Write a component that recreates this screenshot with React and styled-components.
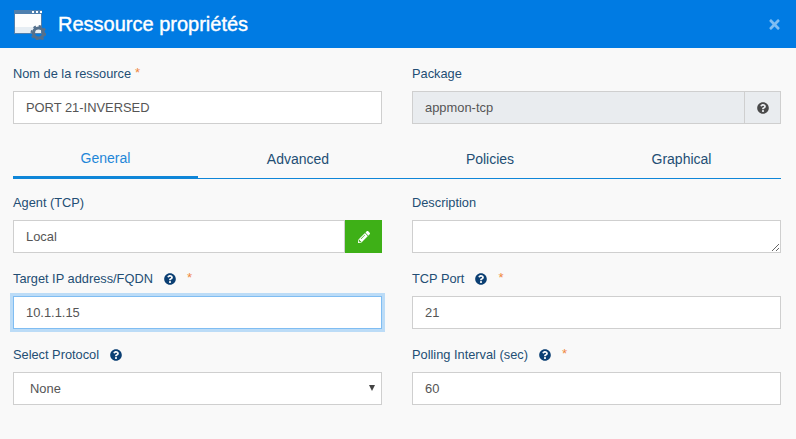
import React from "react";
import styled, { createGlobalStyle } from "styled-components";
import { FaQuestionCircle, FaPencilAlt, FaTimes } from "react-icons/fa";

const GlobalStyle = createGlobalStyle`
  html, body {
    margin: 0;
    padding: 0;
    background: #f9f9f9;
    font-family: "Liberation Sans", Arial, sans-serif;
  }
`;

const Modal = styled.div`
  width: 796px;
  height: 439px;
  overflow: hidden;
  background: #f9f9f9;
`;

const Header = styled.header`
  height: 48px;
  display: flex;
  align-items: center;
  padding: 0 14px 0 14px;
  background: #007be3;
  color: #fff;
`;

const Title = styled.h1`
  flex: 1;
  margin: 0 0 0 12px;
  font-size: 20px;
  font-weight: 400;
  -webkit-text-stroke: 0.4px #fff;
`;

const Close = styled.span`
  display: flex;
  color: #7fbdf2;
  font-size: 15px;
`;

const Body = styled.div`
  padding: 17px 15px 0 13px;
`;

const Grid = styled.div`
  display: grid;
  grid-template-columns: 369px 369px;
  column-gap: 30px;
  row-gap: ${(props) => props.$gap || 0}px;
`;

const Field = styled.div`
  display: flex;
  flex-direction: column;
`;

const Label = styled.label`
  height: 18px;
  margin-bottom: 8px;
  display: flex;
  align-items: center;
  font-size: 12.8px;
  line-height: 18px;
  color: #234e74;
`;

const Star = styled.span`
  color: #f0883e;
  margin-left: ${(props) => props.$gap || 4}px;
  font-size: 13px;
  position: relative;
  top: -1px;
`;

const Help = styled(FaQuestionCircle)`
  margin-left: 11px;
  font-size: 12px;
  color: #0b3f73;
`;

const Input = styled.input`
  box-sizing: border-box;
  flex: 1;
  min-width: 0;
  height: 33px;
  padding: 0 12px;
  border: 1px solid #cfcfcf;
  border-radius: 0;
  outline: none;
  background: ${(props) => (props.disabled ? "#e9ecef" : "#fff")};
  font-family: "Liberation Sans", Arial, sans-serif;
  font-size: 12.9px;
  color: #555;

  &:disabled {
    opacity: 1;
    color: #555;
  }
`;

const FocusInput = styled(Input)`
  border-color: #80bdf2;
  box-shadow: 0 0 0 3px #bcdcf7;
`;

const Area = styled.textarea`
  box-sizing: border-box;
  display: block;
  width: 100%;
  height: 33px;
  min-height: 33px;
  border: 1px solid #cfcfcf;
  border-radius: 0;
  outline: none;
  background: #fff;
`;

const SelectWrap = styled.div`
  position: relative;
  display: flex;
  height: 33px;

  &::after {
    content: "";
    position: absolute;
    top: 13px;
    right: 7px;
    border-left: 3px solid transparent;
    border-right: 3px solid transparent;
    border-top: 6px solid #444;
  }
`;

const Select = styled.select`
  box-sizing: border-box;
  flex: 1;
  appearance: none;
  padding: 0 16px;
  border: 1px solid #cfcfcf;
  border-radius: 0;
  outline: none;
  background: #fff;
  font-family: "Liberation Sans", Arial, sans-serif;
  font-size: 12.9px;
  color: #555;
`;

const InputGroup = styled.div`
  display: flex;
  height: 33px;
`;

const Addon = styled.span`
  box-sizing: border-box;
  width: 37px;
  display: flex;
  align-items: center;
  justify-content: center;
  background: #e9ecef;
  border: 1px solid #cfcfcf;
  margin-left: -1px;
  font-size: 12px;
  color: #4a4a4a;
`;

const EditButton = styled.button`
  width: 37px;
  padding: 0;
  display: flex;
  align-items: center;
  justify-content: center;
  background: #3eb017;
  border: none;
  border-radius: 0;
  font-size: 12px;
  color: #fff;
`;

const Tabs = styled.nav`
  display: grid;
  grid-template-columns: 185px 200px 184px 199px;
  width: 768px;
  height: 38px;
  margin: 16px 0 15px;
  border-bottom: 1px solid #0f86d8;
`;

const Tab = styled.div`
  box-sizing: border-box;
  height: ${(props) => (props.$active ? "39px" : "38px")};
  padding-top: ${(props) => (props.$active ? "9px" : "10px")};
  text-align: center;
  font-size: 14px;
  line-height: 18px;
  color: ${(props) => (props.$active ? "#1f87d8" : "#234e74")};
  border-bottom: ${(props) => (props.$active ? "3px solid #0f86d8" : "none")};
`;

const WindowIcon = () => (
  <svg width="32" height="32" viewBox="0 0 32 32">
    <rect x="0" y="2" width="28" height="24" fill="#4f7fae" />
    <rect x="1" y="6" width="26" height="19" fill="#fdfdfd" />
    <rect x="1" y="19" width="26" height="6" fill="#e6edf3" />
    <rect x="18" y="3" width="2" height="2" fill="#fff" />
    <rect x="22" y="3" width="2" height="2" fill="#fff" />
    <rect x="26" y="3" width="2" height="2" fill="#fff" />
    <circle cx="24.5" cy="25" r="5" fill="none" stroke="#54708c" strokeWidth="3.2" />
    <circle
      cx="24.5"
      cy="25"
      r="7"
      fill="none"
      stroke="#54708c"
      strokeWidth="2"
      strokeDasharray="2.6 2.9"
    />
  </svg>
);

export default function App() {
  return (
    <Modal>
      <GlobalStyle />
      <Header>
        <WindowIcon />
        <Title>Ressource propriétés</Title>
        <Close>
          <FaTimes />
        </Close>
      </Header>
      <Body>
        <Grid>
          <Field>
            <Label>
              Nom de la ressource <Star>*</Star>
            </Label>
            <Input defaultValue="PORT 21-INVERSED" />
          </Field>
          <Field>
            <Label>Package</Label>
            <InputGroup>
              <Input disabled defaultValue="appmon-tcp" />
              <Addon>
                <FaQuestionCircle />
              </Addon>
            </InputGroup>
          </Field>
        </Grid>
        <Tabs>
          <Tab $active>General</Tab>
          <Tab>Advanced</Tab>
          <Tab>Policies</Tab>
          <Tab>Graphical</Tab>
        </Tabs>
        <Grid $gap={17}>
          <Field>
            <Label>Agent (TCP)</Label>
            <InputGroup>
              <Input defaultValue="Local" />
              <EditButton>
                <FaPencilAlt />
              </EditButton>
            </InputGroup>
          </Field>
          <Field>
            <Label>Description</Label>
            <Area />
          </Field>
          <Field>
            <Label>
              Target IP address/FQDN <Help /> <Star $gap={11}>*</Star>
            </Label>
            <InputGroup>
              <FocusInput defaultValue="10.1.1.15" />
            </InputGroup>
          </Field>
          <Field>
            <Label>
              TCP Port <Help /> <Star $gap={11}>*</Star>
            </Label>
            <Input defaultValue="21" />
          </Field>
          <Field>
            <Label>
              Select Protocol <Help />
            </Label>
            <SelectWrap>
              <Select defaultValue="None">
                <option>None</option>
              </Select>
            </SelectWrap>
          </Field>
          <Field>
            <Label>
              Polling Interval (sec) <Help /> <Star $gap={11}>*</Star>
            </Label>
            <Input defaultValue="60" />
          </Field>
        </Grid>
      </Body>
    </Modal>
  );
}
